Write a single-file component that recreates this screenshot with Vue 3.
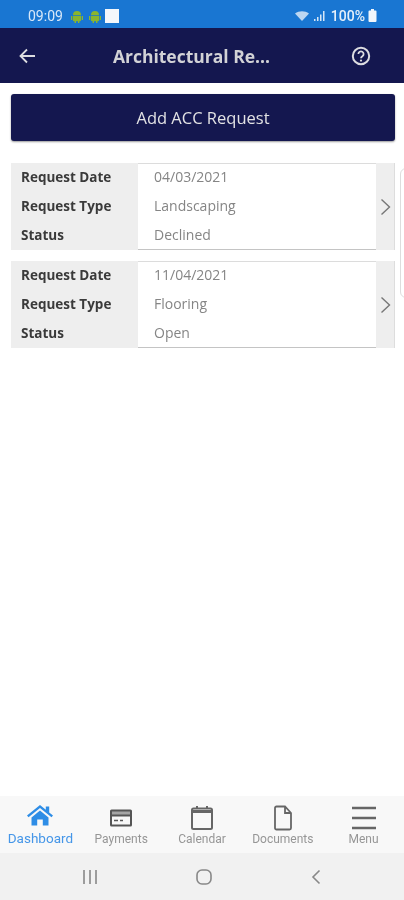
<template>
  <div class="page">
    <div class="status">
      <span class="time">09:09</span>
      <svg class="droid" width="14" height="14" viewBox="0 0 14 14"><path d="M3 6a4 4 0 0 1 8 0zM3 6.800h8v4.400a1 1 0 0 1-1 1H4a1 1 0 0 1-1-1zM1 7h1.300v4H1zM11.700 7H13v4h-1.300zM4.600 12H6v2H4.600zM8 12h1.400v2H8z" fill="#8bb52e" /></svg>
      <svg class="droid" width="14" height="14" viewBox="0 0 14 14"><path d="M3 6a4 4 0 0 1 8 0zM3 6.800h8v4.400a1 1 0 0 1-1 1H4a1 1 0 0 1-1-1zM1 7h1.300v4H1zM11.700 7H13v4h-1.300zM4.600 12H6v2H4.600zM8 12h1.400v2H8z" fill="#8bb52e" /></svg>
      <span class="white-box"></span>
      <span class="spacer"></span>
      <svg width="16" height="12" viewBox="0 0 16 12"><path d="M1 3.500C5 .5 11 .5 15 3.500L8 11z" fill="#bcd6f1" /></svg>
      <svg width="13" height="12" viewBox="0 0 13 12"><path d="M1 9h1.500v2H1zM4 7h1.500v4H4zM7 4.500h1.500V11H7zM10 1h1.500v10H10z" fill="#d5e6f7" /></svg>
      <span class="pct">100%</span>
      <svg width="9" height="13" viewBox="0 0 9 13"><path d="M3 0h3v1.500h1.500a1 1 0 0 1 1 1V12a1 1 0 0 1-1 1h-6a1 1 0 0 1-1-1V2.500a1 1 0 0 1 1-1H3z" fill="#f2f6fb" /></svg>
    </div>

    <header class="topbar">
      <svg class="back" width="20" height="20" viewBox="0 0 20 20"><path d="M17 10H2.500M9 3.500 2.500 10 9 16.500" fill="none" stroke="#dcdce0" stroke-width="1.800" /></svg>
      <h1 class="title">Architectural Re...</h1>
      <svg class="help" width="20" height="20" viewBox="0 0 20 20">
        <circle cx="10" cy="10" r="8.200" fill="none" stroke="#dcdce0" stroke-width="2" />
        <path d="M7.400 8a2.600 2.600 0 1 1 4 2.200c-.9.600-1.400 1-1.400 2" fill="none" stroke="#dcdce0" stroke-width="1.800" />
        <circle cx="10" cy="14.600" r="1.100" fill="#dcdce0" />
      </svg>
    </header>

    <main class="content">
      <button class="add-btn">Add ACC Request</button>

      <div class="list">
        <div v-for="r in requests" :key="r.date" class="card">
          <div class="labels">
            <span>Request Date</span>
            <span>Request Type</span>
            <span>Status</span>
          </div>
          <div class="values">
            <span>{{ r.date }}</span>
            <span>{{ r.type }}</span>
            <span>{{ r.status }}</span>
          </div>
          <div class="chev">
            <svg width="11" height="18" viewBox="0 0 11 18"><path d="M1.500 1.500 9.500 9l-8 7.500" fill="none" stroke="#777" stroke-width="1.400" /></svg>
          </div>
        </div>
      </div>
      <div class="peek"></div>
    </main>

    <nav class="tabs">
      <div class="tab active">
        <svg width="26" height="21" viewBox="0 0 26 21"><path d="M13 0 0 10.500l1.500 1.800L13 3l11.500 9.300 1.500-1.800-3.800-3V1.500h-3.400v3.200zM4.500 12.500 13 5.500l8.500 7V20.500h-5.700v-6h-5.600v6H4.500z" fill="#2e8de6" /></svg>
        <span>Dashboard</span>
      </div>
      <div class="tab">
        <svg width="24" height="20" viewBox="0 0 24 20"><rect x="1" y="1.500" width="22" height="17" rx="1.500" fill="#555" /><rect x="3" y="3.500" width="18" height="3" fill="#a5a5a5" /><rect x="3" y="8.500" width="18" height="8" fill="#f7f7f7" /><path d="M5 12.500h4M11 12.500h3" stroke="#555" stroke-width="1.500" /></svg>
        <span>Payments</span>
      </div>
      <div class="tab">
        <svg width="24" height="26" viewBox="0 0 24 26"><rect x="2" y="3.500" width="20" height="20.500" rx="1.500" fill="none" stroke="#666" stroke-width="2" /><path d="M2 6.500h20" stroke="#666" stroke-width="3" /><path d="M7 1v3M17 1v3" stroke="#666" stroke-width="2" /></svg>
        <span>Calendar</span>
      </div>
      <div class="tab">
        <svg width="20" height="26" viewBox="0 0 20 26"><path d="M3.500 1.500H12L18 8v15a1.500 1.500 0 0 1-1.500 1.500h-13A1.500 1.500 0 0 1 2 23V3a1.500 1.500 0 0 1 1.500-1.500zM12 1.500V8h6" fill="none" stroke="#666" stroke-width="1.800" /></svg>
        <span>Documents</span>
      </div>
      <div class="tab">
        <svg width="26" height="26" viewBox="0 0 26 26"><path d="M1 3h24M1 13h24M1 23h24" stroke="#666" stroke-width="2.600" /></svg>
        <span>Menu</span>
      </div>
    </nav>

    <div class="sysnav">
      <svg width="16" height="16" viewBox="0 0 16 16"><path d="M2 1v14M8 1v14M14 1v14" stroke="#888" stroke-width="1.600" /></svg>
      <svg width="18" height="18" viewBox="0 0 18 18"><rect x="2" y="2" width="14" height="14" rx="5" fill="none" stroke="#888" stroke-width="1.600" /></svg>
      <svg width="12" height="16" viewBox="0 0 12 16"><path d="M9.500 1.500 3 8l6.500 6.500" fill="none" stroke="#888" stroke-width="1.600" /></svg>
    </div>
  </div>
</template>

<script setup>
const requests = [
  { date: "04/03/2021", type: "Landscaping", status: "Declined" },
  { date: "11/04/2021", type: "Flooring", status: "Open" },
];
</script>

<style>
html, body { margin: 0; background: #fff; }
</style>

<style scoped>
.page {
  width: 404px; height: 900px; display: flex; flex-direction: column; overflow: hidden;
  font-family: "Open Sans", sans-serif; background: #fff; filter: blur(0.45px);
}

.status {
  height: 28px; background: #1976d2; display: flex; align-items: center; gap: 3px;
  padding: 3px 27px 0 28px; box-sizing: border-box; flex: none;
}
.time { font-family: Roboto, sans-serif; font-size: 14px; color: #d9e8f8; margin-right: 4px; }
.droid { margin-right: 1px; }
.white-box { width: 14px; height: 14px; margin-left: -1px; background: #f4f7fb; }
.spacer { flex: 1; }
.pct { font-family: Roboto, sans-serif; font-size: 14px; font-weight: 500; color: #e6f0fa; margin-left: 2px; }

.topbar {
  height: 55px; background: #14174f; display: flex; align-items: center; flex: none;
  padding: 0 33px 0 18px; box-sizing: border-box;
}
.title {
  flex: 1; margin: 0; padding-right: 6px; text-align: center; font-size: 17.500px; font-weight: 700; color: #d2d2d6;
}

.content { flex: 1; position: relative; padding: 11px 9px 0 11px; }
.add-btn {
  display: block; width: 100%; height: 47px; border: none; border-radius: 3px;
  background: #14174f; color: #e2e2e4; font-family: inherit; font-size: 16.500px; font-weight: 500;
  box-shadow: 0 1px 2px rgba(0,0,0,0.4);
}

.list { margin-top: 22px; display: flex; flex-direction: column; gap: 11px; }
.card { display: flex; height: 87px; background: #eeeeee; border-right: 1px solid #ddd; box-sizing: border-box; }
.labels, .values {
  display: flex; flex-direction: column; justify-content: space-between;
  box-sizing: border-box; line-height: 19px;
}
.labels { width: 127px; padding: 5px 0 5px 10px; font-size: 13.500px; font-weight: 700; color: #3a3a3a; }
.values {
  width: 238px; padding: 3px 0 5px 16px; background: #fff; color: #858585; font-size: 14px;
  border-top: 1px solid #dcdcdc; border-bottom: 1px solid #c4c4c4;
}
.chev { flex: 1; display: flex; align-items: center; justify-content: center; }

.peek {
  position: absolute; left: 400px; top: 85px; width: 20px; height: 130px; box-sizing: border-box;
  border: 1px solid #ddd; border-radius: 6px;
}

.tabs {
  height: 57px; background: #f8f8f8; display: flex; flex: none; padding-top: 4px; box-sizing: border-box;
}
.tab {
  width: 81px; display: flex; flex-direction: column; align-items: center; justify-content: flex-end;
  padding-bottom: 7px; box-sizing: border-box; font-family: Roboto, sans-serif; font-size: 12px; color: #969696;
}
.tab svg { margin-bottom: 1px; }
.tab:nth-child(1) svg { margin-bottom: 4px; }
.tab:nth-child(2) svg { margin-bottom: 4px; }
.tab.active { color: #4596e8; font-size: 13.500px; }

.sysnav {
  height: 47px; background: #f1f1f1; display: flex; align-items: center; justify-content: space-between;
  padding: 0 82px; box-sizing: border-box; flex: none;
}
</style>
